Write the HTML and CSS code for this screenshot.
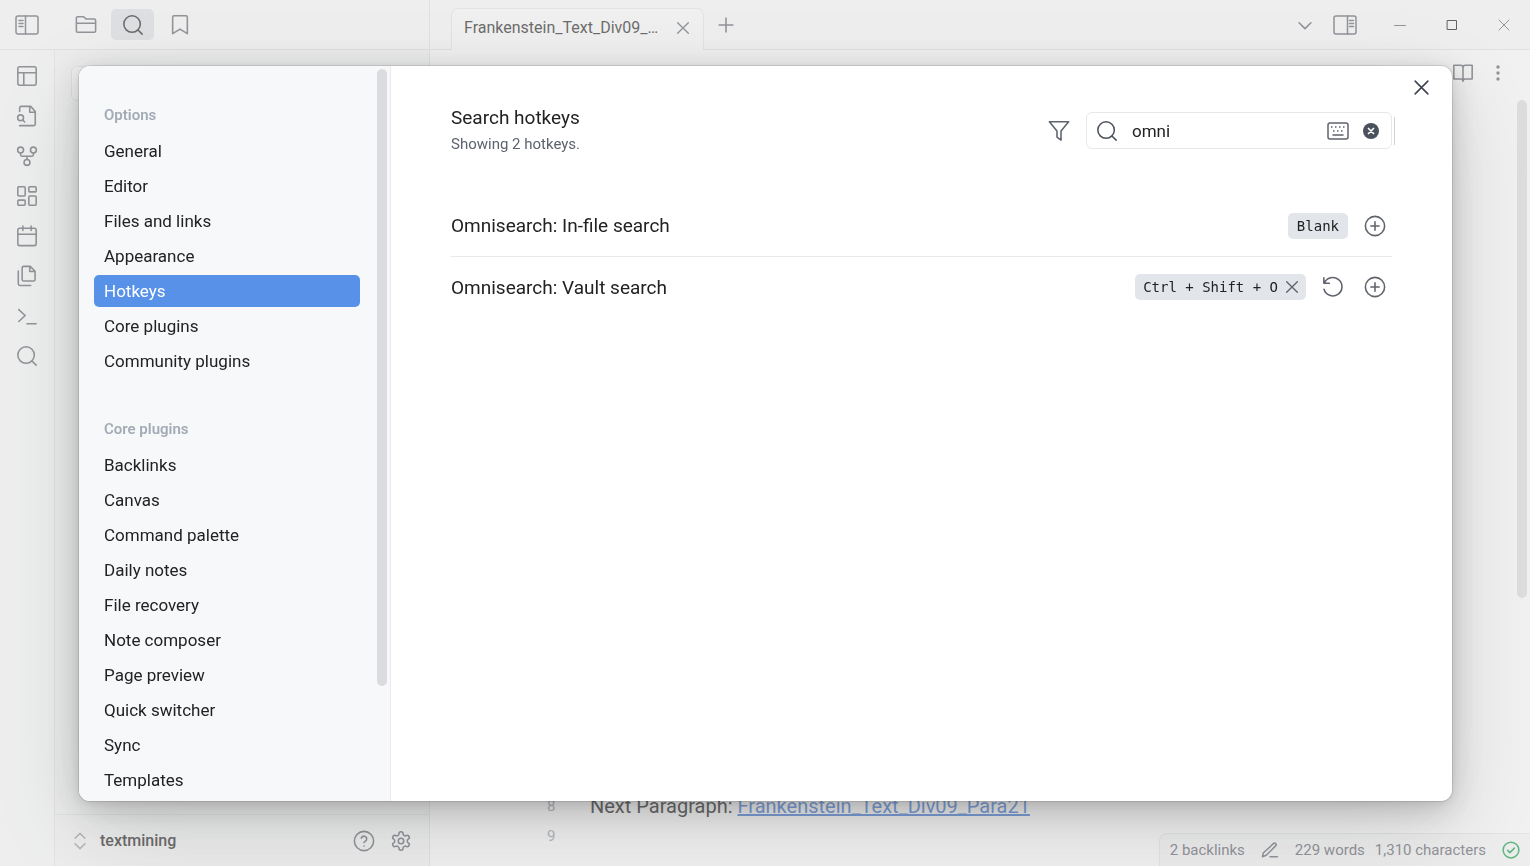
FILE: index.html
```
<!DOCTYPE html>
<html lang="en">
<head>
<meta charset="utf-8">
<title>Hotkeys</title>
<link rel="stylesheet" href="styles.css">
</head>
<body>
<div class="app">
  <header class="titlebar">
    <div class="titlebar-left">
      <button class="icon-btn toggle" aria-label="Toggle left sidebar"><svg class="panel-icon" viewBox="0 0 24 20"><rect x="1" y="1" width="22" height="18" rx="2"/><path d="M10.500 1v18M4 5.500h4M4 8.500h4M4 11.500h4"/></svg></button>
      <button class="icon-btn side-tab" aria-label="Files"><svg viewBox="0 0 24 24"><path d="M1.500 4.500v14A1.500 1.500 0 0 0 3 20h18a1.500 1.500 0 0 0 1.500-1.500V7A1.500 1.500 0 0 0 21 5.500h-9L9.500 3H3A1.500 1.500 0 0 0 1.500 4.500zM1.500 10h21"/></svg></button>
      <button class="icon-btn side-tab selected" aria-label="Search"><svg viewBox="0 0 24 24"><circle cx="11" cy="11" r="9"/><path d="m22 22-4.600-4.600"/></svg></button>
      <button class="icon-btn side-tab" aria-label="Bookmarks"><svg viewBox="0 0 24 24"><path d="M20 21.500l-8-5-8 5V3.500A1.500 1.500 0 0 1 5.500 2h13A1.500 1.500 0 0 1 20 3.500z"/></svg></button>
    </div>
    <div class="titlebar-main">
      <div class="tab"><span>Frankenstein_Text_Div09_…</span><button class="icon-btn" aria-label="Close tab"><svg class="small" viewBox="0 0 24 24"><path d="M20 4 4 20M4 4l16 16"/></svg></button></div>
      <button class="icon-btn new-tab" aria-label="New tab"><svg viewBox="0 0 24 24"><path d="M4.500 12h15M12 4.500v15"/></svg></button>
      <div class="window-tools">
        <button class="icon-btn chevron" aria-label="Tab list"><svg viewBox="0 0 24 24"><path d="m5.500 9.500 6.500 6.500 6.500-6.500"/></svg></button>
        <button class="icon-btn" aria-label="Toggle right sidebar"><svg class="panel-icon" viewBox="0 0 24 20"><rect x="1" y="1" width="22" height="18" rx="2"/><path d="M14.500 1v18M16.500 5.500h4M16.500 8.500h4M16.500 11.500h4"/></svg></button>
        <button class="icon-btn win" aria-label="Minimize"><svg viewBox="0 0 12 12"><path d="M0.500 6.500h11"/></svg></button>
        <button class="icon-btn win dark" aria-label="Maximize"><svg viewBox="0 0 12 12"><path d="M1.500 1.500h9v9h-9z"/></svg></button>
        <button class="icon-btn win" aria-label="Close"><svg viewBox="0 0 12 12"><path d="m1 1 10 10M11 1 1 11"/></svg></button>
      </div>
    </div>
  </header>
  <div class="workspace">
    <nav class="ribbon">
      <button class="icon-btn" aria-label="Layout"><svg viewBox="0 0 24 24"><rect x="2" y="2" width="20" height="20" rx="2"/><path d="M2 8.500h20M8.500 22V8.500"/></svg></button>
      <button class="icon-btn" aria-label="Search in files"><svg viewBox="0 0 24 24"><path d="M4 7V3a1.500 1.500 0 0 1 1.500-1.500H16L21 7v14a1.500 1.500 0 0 1-1.500 1.500H4M15 1.500V8h6"/><circle cx="5" cy="14" r="3.200"/><path d="m9.500 18.500-2.300-2.300"/></svg></button>
      <button class="icon-btn" aria-label="Graph view"><svg viewBox="0 0 24 24"><circle cx="12" cy="19" r="3.200"/><circle cx="5" cy="5.500" r="3.200"/><circle cx="19" cy="5.500" r="3.200"/><path d="M5 8.700v2A1.500 1.500 0 0 0 6.500 12.200h11a1.500 1.500 0 0 0 1.500-1.500v-2M12 12.200v3.500"/></svg></button>
      <button class="icon-btn" aria-label="Canvas"><svg viewBox="0 0 24 24"><rect x="2" y="2" width="8" height="10" rx="1"/><rect x="14" y="2" width="8" height="5.500" rx="1"/><rect x="14" y="12" width="8" height="10" rx="1"/><rect x="2" y="16.500" width="8" height="5.500" rx="1"/></svg></button>
      <button class="icon-btn" aria-label="Daily note"><svg viewBox="0 0 24 24"><rect x="2" y="3.500" width="20" height="19" rx="2"/><path d="M16.500 1v5M7.500 1v5M2 10h20"/></svg></button>
      <button class="icon-btn" aria-label="Templates"><svg viewBox="0 0 24 24"><path d="M15.500 1.500h-7A1.800 1.800 0 0 0 6.700 3.300v12.400a1.800 1.800 0 0 0 1.800 1.800H19a1.800 1.800 0 0 0 1.800-1.800V6.800zM15 1.500V7h5.500M2.500 6.500v14A1.800 1.800 0 0 0 4.300 22.300H16"/></svg></button>
      <button class="icon-btn" aria-label="Command palette"><svg viewBox="0 0 24 24"><path d="m3 18 7-6.500L3 5M12 20.500h10"/></svg></button>
      <button class="icon-btn" aria-label="Omnisearch"><svg viewBox="0 0 24 24"><circle cx="11" cy="11" r="9"/><path d="m22 22-4.600-4.600"/></svg></button>
    </nav>
    <aside class="sidebar">
      <div class="sidebar-search"></div>
      <footer class="vault">
        <svg class="updown" viewBox="0 0 14 20"><path d="m1.500 7 5.500-5.500L12.500 7M1.500 13 7 18.500l5.500-5.500"/></svg>
        <span class="vault-name">textmining</span>
        <button class="icon-btn" aria-label="Help"><svg viewBox="0 0 24 24"><circle cx="12" cy="12" r="10.500"/><path d="M9 9a3 3 0 0 1 5.900 1c0 2-2.900 2.600-2.900 4M12 17.500v.1"/></svg></button>
        <button class="icon-btn" aria-label="Settings"><svg viewBox="0 0 24 24"><path d="M12.220 2h-.44a2 2 0 0 0-2 2v.18a2 2 0 0 1-1 1.730l-.43.25a2 2 0 0 1-2 0l-.15-.08a2 2 0 0 0-2.730.73l-.22.38a2 2 0 0 0 .73 2.730l.15.1a2 2 0 0 1 1 1.720v.51a2 2 0 0 1-1 1.740l-.15.09a2 2 0 0 0-.73 2.730l.22.38a2 2 0 0 0 2.730.73l.15-.08a2 2 0 0 1 2 0l.43.25a2 2 0 0 1 1 1.730V20a2 2 0 0 0 2 2h.44a2 2 0 0 0 2-2v-.18a2 2 0 0 1 1-1.730l.43-.25a2 2 0 0 1 2 0l.15.08a2 2 0 0 0 2.730-.73l.22-.39a2 2 0 0 0-.73-2.730l-.15-.08a2 2 0 0 1-1-1.740v-.5a2 2 0 0 1 1-1.740l.15-.09a2 2 0 0 0 .73-2.730l-.22-.38a2 2 0 0 0-2.730-.73l-.15.08a2 2 0 0 1-2 0l-.43-.25a2 2 0 0 1-1-1.730V4a2 2 0 0 0-2-2z"/><circle cx="12" cy="12" r="3"/></svg></button>
      </footer>
    </aside>
    <main class="editor">
      <div class="editor-tools">
        <button class="icon-btn" aria-label="Reading view"><svg viewBox="0 0 24 24"><path d="M2 3.500h7.500A2.500 2.500 0 0 1 12 6a2.500 2.500 0 0 1 2.500-2.500H22v15h-7.500A2.500 2.500 0 0 0 12 21a2.500 2.500 0 0 0-2.500-2.500H2zM12 6v15"/></svg></button>
        <button class="icon-btn" aria-label="More options"><svg class="dots" viewBox="0 0 24 24"><circle cx="12" cy="5.500" r="1"/><circle cx="12" cy="12" r="1"/><circle cx="12" cy="18.500" r="1"/></svg></button>
      </div>
      <div class="lines">
        <div class="line"><span class="num">8</span><span>Next Paragraph: <a href="#">Frankenstein_Text_Div09_Para21</a></span></div>
        <div class="line"><span class="num">9</span></div>
      </div>
      <div class="page-scroll"></div>
    </main>
  </div>
  <div class="status">
    <span>2 backlinks</span>
    <svg viewBox="0 0 24 24"><path d="M12 21h10M16.500 3.500a2.100 2.100 0 0 1 3 3L7 19l-5 2 1-5z"/></svg>
    <span class="words">229 words</span>
    <span>1,310 characters</span>
    <svg class="ok" viewBox="0 0 24 24"><circle cx="12" cy="12" r="10.500"/><path d="m7.500 12.500 3 3 6-6"/></svg>
  </div>
</div>

<div class="cover">
  <section class="modal" role="dialog" aria-label="Settings">
    <nav class="menu">
      <div class="menu-group">
        <h2>Options</h2>
        <a href="#">General</a>
        <a href="#">Editor</a>
        <a href="#">Files and links</a>
        <a href="#">Appearance</a>
        <a href="#" class="active">Hotkeys</a>
        <a href="#">Core plugins</a>
        <a href="#">Community plugins</a>
      </div>
      <div class="menu-group">
        <h2>Core plugins</h2>
        <a href="#">Backlinks</a>
        <a href="#">Canvas</a>
        <a href="#">Command palette</a>
        <a href="#">Daily notes</a>
        <a href="#">File recovery</a>
        <a href="#">Note composer</a>
        <a href="#">Page preview</a>
        <a href="#">Quick switcher</a>
        <a href="#">Sync</a>
        <a href="#">Templates</a>
      </div>
      <div class="menu-scroll"></div>
    </nav>
    <div class="content">
      <button class="icon-btn close" aria-label="Close"><svg viewBox="0 0 24 24"><path d="M20 4 4 20M4 4l16 16"/></svg></button>
      <div class="search-row">
        <div class="info">
          <label for="hotkey-search">Search hotkeys</label>
          <p>Showing 2 hotkeys.</p>
        </div>
        <button class="icon-btn" aria-label="Filter"><svg viewBox="0 0 24 24"><path d="M22.500 2h-21l8.300 9.900v6.900l4.400 3.200V11.900z"/></svg></button>
        <div class="search">
          <svg viewBox="0 0 24 24"><circle cx="11" cy="11" r="9"/><path d="m22 22-4.600-4.600"/></svg>
          <input id="hotkey-search" type="text" value="omni">
          <button class="icon-btn" aria-label="Filter by key"><svg class="keyboard" viewBox="0 0 22 18"><rect x="1" y="1" width="20" height="16" rx="2"/><path class="keys" d="M4 5h1.500M8 5h1.500M12 5h1.500M16 5h1.500M6 9h1.500M10 9h1.500M14 9h1.500"/><path d="M6 13h10"/></svg></button>
          <button class="icon-btn" aria-label="Clear"><svg class="clear" viewBox="0 0 16 16"><circle cx="8" cy="8" r="8"/><path d="m5.500 5.500 5 5M10.500 5.500l-5 5"/></svg></button>
        </div>
      </div>
      <div class="hotkey">
        <span class="name">Omnisearch: In-file search</span>
        <kbd class="blank">Blank</kbd>
        <button class="icon-btn" aria-label="Add hotkey"><svg viewBox="0 0 24 24"><circle cx="12" cy="12" r="10.500"/><path d="M12 7.500v9M7.500 12h9"/></svg></button>
      </div>
      <div class="hotkey">
        <span class="name">Omnisearch: Vault search</span>
        <kbd>Ctrl + Shift + O<button class="icon-btn" aria-label="Remove hotkey"><svg class="small" viewBox="0 0 24 24"><path d="M20 4 4 20M4 4l16 16"/></svg></button></kbd>
        <div class="actions">
          <button class="icon-btn" aria-label="Restore default"><svg viewBox="0 0 24 24"><path d="M2 2v6h6M2.500 8A10 10 0 1 1 2.200 14.500"/></svg></button>
          <button class="icon-btn" aria-label="Add hotkey"><svg viewBox="0 0 24 24"><circle cx="12" cy="12" r="10.500"/><path d="M12 7.500v9M7.500 12h9"/></svg></button>
        </div>
      </div>
    </div>
  </section>
</div>
</body>
</html>
```
FILE: styles.css
```
* { box-sizing: border-box; }

body {
  margin: 0;
  font-family: Roboto, sans-serif;
  font-size: 17px;
  color: #222;
  background: #fff;
  overflow: hidden;
}

.icon-btn {
  display: flex;
  align-items: center;
  justify-content: center;
  padding: 0;
  border: 0;
  background: none;
  color: #5f646c;
  font: inherit;
}

svg {
  display: block;
  flex: none;
  width: 22px;
  height: 22px;
  fill: none;
  stroke: currentColor;
  stroke-width: 1.700;
  stroke-linecap: round;
  stroke-linejoin: round;
}
svg.small { width: 16px; height: 16px; stroke-width: 2; }
svg.panel-icon { width: 24px; height: 20px; stroke-width: 1.500; }

/* Application window */
.app {
  position: relative;
  display: flex;
  flex-direction: column;
  height: 100vh;
}

.titlebar {
  display: flex;
  height: 50px;
  flex: none;
  background: #fbfbfc;
  border-bottom: 1px solid #e2e5e8;
}
.titlebar-left {
  display: flex;
  align-items: center;
  gap: 4px;
  width: 430px;
  padding-left: 15px;
  border-right: 1px solid #e2e5e8;
}
.toggle { margin-right: 21px; }
.side-tab { width: 43px; height: 31px; border-radius: 5px; }
.selected { background: #dfe2e6; color: #222; }

.titlebar-main {
  display: flex;
  align-items: center;
  flex: 1;
  padding-left: 21px;
}
.tab {
  position: relative;
  display: flex;
  align-items: center;
  justify-content: space-between;
  align-self: flex-end;
  width: 253px;
  height: 42px;
  margin-bottom: -1px;
  padding: 0 12px 4px;
  border: 1px solid #e6e8ea;
  border-bottom: 0;
  border-radius: 7px 7px 0 0;
  background: #fdfdfd;
  font-size: 16px;
}
.new-tab { margin-left: 11px; }
.window-tools {
  display: flex;
  align-items: center;
  margin-left: auto;
}
.chevron { margin-right: 17px; }
.win { width: 52px; }
.win:nth-of-type(3) { margin-left: 17px; }
.win svg { width: 12px; height: 12px; stroke-width: 1; }
.dark { color: #111; }

.workspace { display: flex; flex: 1; min-height: 0; }

.ribbon {
  display: flex;
  flex-direction: column;
  gap: 18px;
  width: 55px;
  padding-top: 15px;
  background: #fafbfb;
  border-right: 1px solid #e6e8ea;
}

.sidebar {
  display: flex;
  flex-direction: column;
  justify-content: space-between;
  width: 375px;
  padding: 16px 0 0;
  background: #f8f9fa;
  border-right: 1px solid #e2e5e8;
}
.sidebar-search {
  height: 35px;
  margin: 0 16px;
  border: 1px solid #e2e5e8;
  border-radius: 6px;
  background: #fff;
}
.vault {
  display: flex;
  align-items: center;
  gap: 15px;
  height: 52px;
  padding: 0 17px 0 18px;
  border-top: 1px solid #e6e8ea;
}
.updown { width: 14px; height: 18px; color: #9aa0a8; }
.vault-name { flex: 1; margin-left: -2px; font-size: 16px; font-weight: 500; }

.editor {
  position: relative;
  display: flex;
  flex-direction: column;
  justify-content: space-between;
  flex: 1;
  background: #fff;
}
.editor-tools {
  display: flex;
  justify-content: flex-end;
  gap: 13px;
  padding: 12px 21px 0 0;
}
.dots circle { fill: currentColor; }
.lines { padding: 0 0 15px 117px; }
.line { display: flex; align-items: center; height: 30px; font-size: 20px; }
.num { width: 43px; font-size: 15px; color: #9aa0a8; }
.line a { color: #3f7ad8; text-decoration-thickness: 2px; }
.page-scroll {
  position: absolute;
  top: 50px;
  right: 3px;
  width: 10px;
  height: 61%;
  border-radius: 5px;
  background: #dedede;
}

.status {
  position: absolute;
  right: 0;
  bottom: 0;
  display: flex;
  align-items: center;
  height: 33px;
  padding: 0 10px;
  border: 1px solid #e6e8ea;
  border-width: 1px 0 0 1px;
  border-radius: 8px 0 0 0;
  background: #f8f9fa;
  color: #5f646c;
  font-size: 15px;
}
.status svg { width: 18px; height: 18px; margin: 0 16px; stroke-width: 2; }
.status .words { margin-right: 10px; }
.status svg.ok { margin-right: 0; color: #08a045; }

/* Settings dialog */
.cover {
  position: fixed;
  inset: 0;
  display: flex;
  padding: 66px 78px 65px 79px;
  background: rgba(220, 220, 220, 0.4);
}
.modal {
  display: flex;
  flex: 1;
  min-width: 0;
  border-radius: 11px;
  overflow: hidden;
  background: #fff;
  box-shadow:
    0 0 0 1px rgba(0, 0, 0, 0.100),
    0 2px 8px rgba(0, 0, 0, 0.080),
    0 8px 32px rgba(0, 0, 0, 0.180),
    0 28px 90px rgba(0, 0, 0, 0.140);
}

.menu {
  position: relative;
  width: 312px;
  flex: none;
  padding: 36px 30px 0 15px;
  background: #f6f8fa;
  border-right: 1px solid #e8eaed;
  overflow: hidden;
}
.menu-group { margin-bottom: 39px; }
.menu h2 {
  margin: 0 0 7px;
  padding: 0 10px;
  font-size: 15px;
  font-weight: 600;
  line-height: 26px;
  color: #a3abb5;
}
.menu a {
  display: block;
  margin-bottom: 3px;
  padding: 0 10px;
  border-radius: 5px;
  line-height: 32px;
  color: #222;
  text-decoration: none;
}
.menu a.active { background: #5891e8; color: #fff; }
.menu-scroll {
  position: absolute;
  top: 3px;
  right: 3px;
  width: 10px;
  height: 84%;
  border-radius: 5px;
  background: #dadcdf;
}

.content {
  position: relative;
  flex: 1;
  min-width: 0;
  padding: 38px 60px 0;
}
.close { position: absolute; top: 12px; right: 21px; color: #3c434d; }
.close svg { width: 19px; height: 19px; stroke-width: 2; }

.search-row {
  display: flex;
  align-items: center;
  gap: 16px;
  margin-bottom: 38px;
}
.info { flex: 1; }
.info label { display: block; font-size: 19px; line-height: 28px; }
.info p { margin: 0; font-size: 15px; line-height: 25px; color: #5c6370; }
.search {
  position: relative;
  display: flex;
  align-items: center;
  gap: 14px;
  width: 306px;
  height: 37px;
  padding: 0 12px 0 9px;
  border: 1px solid #e6e8ea;
  border-radius: 6px;
  color: #4c535d;
}
.search::after {
  content: "";
  position: absolute;
  top: 4px;
  right: -4px;
  width: 1px;
  height: 28px;
  background: #d0d2d5;
}
.search input {
  flex: 1;
  min-width: 0;
  padding: 0;
  border: 0;
  outline: 0;
  background: none;
  font: inherit;
  color: #222;
}
svg.keyboard { width: 22px; height: 18px; stroke-width: 1.500; }
.keyboard .keys { stroke-width: 1.500; stroke-linecap: butt; }
svg.clear { width: 16px; height: 16px; }
.clear circle { fill: #4a515c; stroke: none; }
.clear path { stroke: #fff; }

.hotkey {
  display: flex;
  align-items: center;
  gap: 16px;
  height: 61px;
  padding-right: 6px;
}
.hotkey + .hotkey { border-top: 1px solid #e8eaed; }
.actions { display: flex; gap: 20px; }
.name { flex: 1; font-size: 19px; }
kbd {
  display: flex;
  align-items: center;
  gap: 6px;
  height: 26px;
  padding: 0 6px 0 8px;
  border-radius: 5px;
  background: #e2e5ea;
  font-family: "DejaVu Sans Mono", monospace;
  font-size: 14px;
  color: #222;
}
kbd.blank { padding: 0 9px; }
```
